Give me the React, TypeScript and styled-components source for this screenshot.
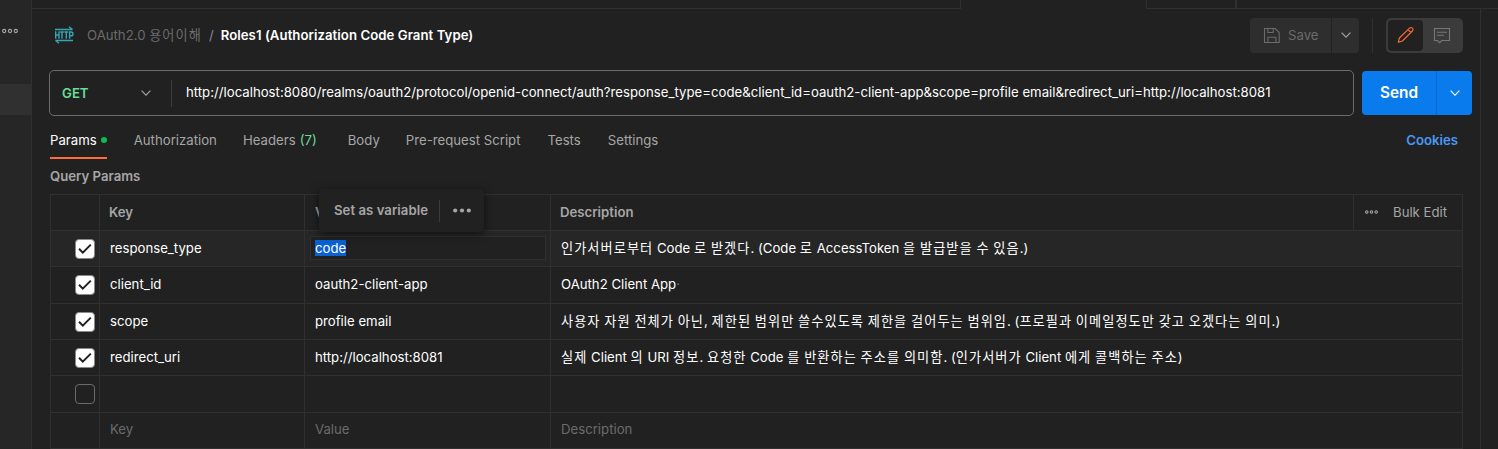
import React from "react";
import styled, { createGlobalStyle } from "styled-components";

const GlobalStyle = createGlobalStyle`
  *, *::before, *::after { box-sizing: border-box; }
  html, body { margin: 0; padding: 0; background: #212121; overflow: hidden; }
  body {
    font-family: Inter, "Noto Sans CJK KR", sans-serif;
    font-size: 13.2px;
    line-height: 18px;
    color: #fff;
  }
`;

const line = "#303030";
const muted = "#a6a6a6";
const faint = "#6b6b6b";

const Shell = styled.div`
  display: flex;
  width: 1498px;
  height: 449px;
  background: #212121;
  overflow: hidden;
  white-space: nowrap;
`;

const Sidebar = styled.aside`
  flex: none;
  width: 32px;
  background: #262626;
  border-right: 1px solid ${line};
`;

const SidebarMenu = styled.div`
  height: 84px;
  padding: 28px 0 0 2px;
  line-height: 0;
`;

const SidebarSelection = styled.div`
  height: 31px;
  background: #303030;
`;

const Main = styled.div`
  flex: 1;
  display: flex;
  flex-direction: column;
  min-width: 0;
`;

const TabStrip = styled.div`
  display: flex;
  flex: none;
  height: 9px;
`;

const StripTab = styled.div<{ $width: number; $active?: boolean; $edge?: number }>`
  flex: none;
  width: ${(p) => p.$width}px;
  border-bottom: ${(p) => (p.$active ? "none" : `1px solid ${line}`)};
  border-right: ${(p) => p.$edge ?? 0}px solid ${line};
`;

const Body = styled.div`
  flex: 1;
  display: flex;
  min-height: 0;
`;

const Content = styled.main`
  flex: none;
  width: 1449px;
  border-right: 1px solid ${line};
`;

const TopBar = styled.header`
  display: flex;
  align-items: center;
  height: 52px;
  padding: 0 17px 0 22px;
`;

const Crumb = styled.div`
  flex: 1;
  display: flex;
  align-items: center;
`;

const CrumbParent = styled.span`
  margin-left: 13px;
  color: ${faint};
`;

const CrumbSlash = styled.span`
  margin: 0 7px 0 7px;
  color: #8a8a8a;
`;

const CrumbTitle = styled.span`
  font-weight: 600;
  letter-spacing: 0.05px;
`;

const SaveButton = styled.button`
  display: flex;
  align-items: center;
  gap: 7px;
  width: 81px;
  height: 35px;
  padding: 0 0 0 13px;
  border: 0;
  border-radius: 4px 0 0 4px;
  background: #2e2e2e;
  color: ${faint};
  font: inherit;
`;

const SaveMenu = styled.button`
  display: flex;
  align-items: center;
  justify-content: center;
  width: 27px;
  height: 35px;
  margin-left: 1px;
  padding: 0;
  border: 0;
  border-radius: 0 4px 4px 0;
  background: #2e2e2e;
`;

const BarDivider = styled.div`
  width: 1px;
  height: 35px;
  margin: 0 13px;
  background: ${line};
`;

const ModeSwitch = styled.div`
  display: flex;
  width: 77px;
  height: 35px;
  padding: 2px;
  border-radius: 5px;
  background: #3b3b3b;
`;

const Mode = styled.div<{ $on?: boolean }>`
  display: flex;
  align-items: center;
  justify-content: center;
  width: ${(p) => (p.$on ? 35 : 38)}px;
  height: 31px;
  border-radius: 4px;
  background: ${(p) => (p.$on ? "#212121" : "transparent")};
`;

const RequestRow = styled.div`
  display: flex;
  align-items: center;
  height: 46px;
  margin: 9px 0 0 17px;
`;

const UrlBox = styled.div`
  display: flex;
  align-items: center;
  width: 1305px;
  height: 46px;
  border: 1px solid ${faint};
  border-radius: 5px;
`;

const Method = styled.div`
  display: flex;
  align-items: center;
  justify-content: space-between;
  width: 122px;
  height: 27px;
  padding: 0 20px 0 12px;
  border-right: 1px solid #3b3b3b;
  color: #6bdd9a;
  font-weight: 600;
`;

const Url = styled.div`
  padding: 0 0 2px 14px;
  letter-spacing: 0.005px;
`;

const SendGroup = styled.div`
  display: flex;
  width: 110px;
  height: 44px;
  margin-left: 8px;
  border-radius: 4px;
  background: #097bed;
  overflow: hidden;
`;

const Send = styled.div`
  display: flex;
  align-items: center;
  justify-content: center;
  width: 75px;
  border-right: 1px solid #086ad0;
  font-size: 15.4px;
  font-weight: 600;
`;

const SendMenu = styled.div`
  flex: 1;
  display: flex;
  align-items: center;
  justify-content: center;
`;

const Tabs = styled.nav`
  display: flex;
  height: 43px;
  padding: 0 22px 0 18px;
`;

const Tab = styled.div<{ $left: number; $active?: boolean }>`
  display: flex;
  align-items: center;
  height: 43px;
  padding-top: 8px;
  padding-bottom: ${(p) => (p.$active ? 1 : 3)}px;
  margin-left: ${(p) => p.$left}px;
  color: ${(p) => (p.$active ? "#fff" : muted)};
  border-bottom: ${(p) => (p.$active ? "2px solid #ff6c37" : "none")};
`;

const ActiveDot = styled.i`
  width: 6px;
  height: 6px;
  margin-left: 4px;
  border-radius: 50%;
  background: #0cbb52;
`;

const Count = styled.span`
  margin-left: 4px;
  color: #6bdd9a;
`;

const Cookies = styled.a`
  margin-left: auto;
  padding-top: 15px;
  color: #4a97f5;
  font-weight: 600;
`;

const SectionTitle = styled.h2`
  height: 27px;
  margin: 8px 0 0 18px;
  color: ${muted};
  font-size: 13.2px;
  line-height: 18px;
  font-weight: 600;
`;

const Table = styled.div`
  width: 1413px;
  margin-left: 18px;
  border: solid ${line};
  border-width: 1px 1px 0 1px;
`;

const Row = styled.div<{ $h: number; $lit?: boolean; $head?: boolean; $faint?: boolean }>`
  display: grid;
  grid-template-columns: 49px 205px 246px 1fr ${(p) => (p.$head ? "108px" : "")};
  height: ${(p) => p.$h}px;
  border-bottom: 1px solid ${line};
  background: ${(p) => (p.$lit ? "#262626" : "transparent")};
  color: ${(p) => (p.$head ? muted : p.$faint ? faint : "#fff")};
  font-weight: ${(p) => (p.$head ? 600 : 400)};
`;

const Cell = styled.div<{ $pad?: number; $bottom?: number; $last?: boolean }>`
  display: flex;
  align-items: center;
  min-width: 0;
  padding-left: ${(p) => p.$pad ?? 10}px;
  padding-bottom: ${(p) => p.$bottom ?? 2}px;
  border-right: ${(p) => (p.$last ? "none" : `1px solid ${line}`)};
`;

const BulkCell = styled.div`
  display: flex;
  align-items: center;
  gap: 15px;
  padding: 0 0 2px 11px;
  font-weight: 400;
`;

const Check = styled.span<{ $on?: boolean }>`
  display: flex;
  align-items: center;
  justify-content: center;
  width: 20px;
  height: 20px;
  border: 1px solid ${(p) => (p.$on ? "#8a8a8a" : faint)};
  border-radius: 4px;
  background: ${(p) => (p.$on ? "#fff" : "transparent")};
`;

const ValueInput = styled.div`
  display: flex;
  align-items: center;
  width: 236px;
  height: 24px;
  padding-left: 4px;
  border: 1px solid ${line};
  background: #212121;
`;

const Selected = styled.span`
  height: 16px;
  line-height: 16px;
  background: #0a61cf;
`;

const TrailingSpace = styled.span`
  color: ${faint};
`;

const HangulRun = styled.span<{ $spacing: number }>`
  letter-spacing: ${(p) => p.$spacing}px;
`;

const VariablePopup = styled.div`
  position: absolute;
  left: 319px;
  top: 189px;
  display: flex;
  align-items: center;
  width: 165px;
  height: 43px;
  padding-left: 15px;
  border-radius: 4px;
  background: #212121;
  box-shadow: 0 2px 9px rgba(0, 0, 0, 0.6);
  color: ${muted};
  font-weight: 600;
  white-space: nowrap;
`;

const PopupLabel = styled.span`
  padding-bottom: 2px;
  letter-spacing: 0.03px;
`;

const PopupDivider = styled.i`
  width: 1px;
  height: 22px;
  margin: 0 13px 0 11px;
  background: #3b3b3b;
`;

function Mixed({ text, spacing = 1.05 }: { text: string; spacing?: number }) {
  return (
    <span>
      {text.split(/([\uac00-\ud7a3]+)/).map((part, i) =>
        i % 2 ? <HangulRun key={i} $spacing={spacing}>{part}</HangulRun> : part
      )}
    </span>
  );
}

const Chevron = ({ color = muted }: { color?: string }) => (
  <svg width="10" height="6" viewBox="0 0 10 6" fill="none" stroke={color} strokeWidth="1.1">
    <path d="M.6.7 5 5.1 9.4.7" />
  </svg>
);

const Dots = ({ w, r }: { w: number; r: number }) => (
  <svg width={w} height="6" viewBox={`0 0 ${w} 6`} fill="none" stroke={muted} strokeWidth="1.1">
    <circle cx={r + 0.6} cy="3" r={r} />
    <circle cx={w / 2} cy="3" r={r} />
    <circle cx={w - r - 0.6} cy="3" r={r} />
  </svg>
);

const HttpIcon = () => (
  <svg width="20" height="18" viewBox="0 0 20 18" fill="none" stroke="#35a6b4" strokeWidth="1.4">
    <path d="M1 3.5h17.5M15 .8l3.5 2.7M19 14.5H1.5M5 17.2l-3.5-2.7" />
    <path d="M1.7 5.3v7.4M5 5.3v7.4M1.7 9H5M6.2 6h3.6M8 6v6.7M10.4 6h3.8M12.3 6v6.7M15.6 12.7V6h1.5a1.7 1.7 0 0 1 0 3.8h-1.5" />
  </svg>
);

const SaveIcon = () => (
  <svg width="18" height="17" viewBox="0 0 18 17" fill="none" stroke={faint} strokeWidth="1.1">
    <path d="M1.5 1.5h10.7l4 4V15.5H1.5zM4.9 1.5v4h5.3v-4M4.9 15.5v-5.3h8v5.3" />
  </svg>
);

const PencilIcon = () => (
  <svg width="18" height="18" viewBox="0 0 18 18" fill="none" stroke="#ff6c37" strokeWidth="1.1" strokeLinejoin="round">
    <path d="M1.3 16.3 2.4 12 12.5 2.1a2 2 0 0 1 2.9 0 2 2 0 0 1 0 2.9L5.4 15zM11 3.6l2.9 2.9" />
  </svg>
);

const CommentIcon = () => (
  <svg width="18" height="17" viewBox="0 0 18 17" fill="none" stroke="#777" strokeWidth="1.1">
    <path d="M1.5 1.5h15v12H8.8L6.6 15.7l-2.2-2.2H1.5zM4 5.2h10M4 8.2h7" />
  </svg>
);

const CheckMark = () => (
  <svg width="14" height="12" viewBox="0 0 14 12" fill="none" stroke="#212121" strokeWidth="2">
    <path d="M1 5.8 4.8 9.6 12.8 1.6" />
  </svg>
);

const EllipsisIcon = () => (
  <svg width="18" height="5" viewBox="0 0 18 5" fill={muted}>
    <circle cx="2.2" cy="2.5" r="2.1" />
    <circle cx="9" cy="2.5" r="2.1" />
    <circle cx="15.8" cy="2.5" r="2.1" />
  </svg>
);

const params = [
  { key: "response_type", value: "code", desc: "인가서버로부터 Code 로 받겠다. (Code 로 AccessToken 을 발급받을 수 있음.)", h: 36 },
  { key: "client_id", value: "oauth2-client-app", desc: "OAuth2 Client App", h: 37 },
  { key: "scope", value: "profile email", desc: "사용자 자원 전체가 아닌, 제한된 범위만 쓸수있도록 제한을 걸어두는 범위임. (프로필과 이메일정도만 갖고 오겠다는 의미.)", h: 36 },
  { key: "redirect_uri", value: "http://localhost:8081", desc: "실제 Client 의 URI 정보. 요청한 Code 를 반환하는 주소를 의미함. (인가서버가 Client 에게 콜백하는 주소)", h: 36 },
];

export default function App() {
  return (
    <Shell>
      <GlobalStyle />
      <Sidebar>
        <SidebarMenu><Dots w={16} r={1.6} /></SidebarMenu>
        <SidebarSelection />
      </Sidebar>
      <Main>
        <TabStrip>
          <StripTab $width={929} $edge={1} />
          <StripTab $width={186} $active $edge={1} />
          <StripTab $width={90} $edge={2} />
          <StripTab $width={261} />
        </TabStrip>
        <Body>
          <Content>
            <TopBar>
              <Crumb>
                <HttpIcon />
                <CrumbParent><Mixed text="OAuth2.0 용어이해" /></CrumbParent>
                <CrumbSlash>/</CrumbSlash>
                <CrumbTitle>Roles1 (Authorization Code Grant Type)</CrumbTitle>
              </Crumb>
              <SaveButton><SaveIcon />Save</SaveButton>
              <SaveMenu><Chevron /></SaveMenu>
              <BarDivider />
              <ModeSwitch>
                <Mode $on><PencilIcon /></Mode>
                <Mode><CommentIcon /></Mode>
              </ModeSwitch>
            </TopBar>
            <RequestRow>
              <UrlBox>
                <Method>GET<Chevron /></Method>
                <Url>http://localhost:8080/realms/oauth2/protocol/openid-connect/auth?response_type=code&amp;client_id=oauth2-client-app&amp;scope=profile email&amp;redirect_uri=http://localhost:8081</Url>
              </UrlBox>
              <SendGroup>
                <Send>Send</Send>
                <SendMenu><Chevron color="#fff" /></SendMenu>
              </SendGroup>
            </RequestRow>
            <Tabs>
              <Tab $left={0} $active>Params<ActiveDot /></Tab>
              <Tab $left={27}>Authorization</Tab>
              <Tab $left={26}>Headers<Count>(7)</Count></Tab>
              <Tab $left={31}>Body</Tab>
              <Tab $left={26}>Pre-request Script</Tab>
              <Tab $left={27}>Tests</Tab>
              <Tab $left={27}>Settings</Tab>
              <Cookies>Cookies</Cookies>
            </Tabs>
            <SectionTitle>Query Params</SectionTitle>
            <Table>
              <Row $h={36} $head>
                <Cell />
                <Cell $pad={9}>Key</Cell>
                <Cell>Value</Cell>
                <Cell $pad={9}>Description</Cell>
                <BulkCell><Dots w={13} r={1.2} />Bulk Edit</BulkCell>
              </Row>
              {params.map((p, i) => (
                <Row key={p.key} $h={p.h} $lit={i === 0}>
                  <Cell $pad={24} $bottom={0}><Check $on><CheckMark /></Check></Cell>
                  <Cell>{p.key}</Cell>
                  <Cell $pad={i === 0 ? 5 : 10}>
                    {i === 0 ? <ValueInput><Selected>{p.value}</Selected></ValueInput> : p.value}
                  </Cell>
                  <Cell $last>
                    <Mixed text={p.desc} />
                    {i === 1 && <TrailingSpace>·</TrailingSpace>}
                  </Cell>
                </Row>
              ))}
              <Row $h={37}>
                <Cell $pad={24} $bottom={0}><Check /></Cell>
                <Cell /><Cell /><Cell $last />
              </Row>
              <Row $h={36} $faint>
                <Cell />
                <Cell $bottom={4}>Key</Cell>
                <Cell $bottom={4}>Value</Cell>
                <Cell $bottom={4} $last>Description</Cell>
              </Row>
            </Table>
          </Content>
        </Body>
      </Main>
      <VariablePopup>
        <PopupLabel>Set as variable</PopupLabel>
        <PopupDivider />
        <EllipsisIcon />
      </VariablePopup>
    </Shell>
  );
}
